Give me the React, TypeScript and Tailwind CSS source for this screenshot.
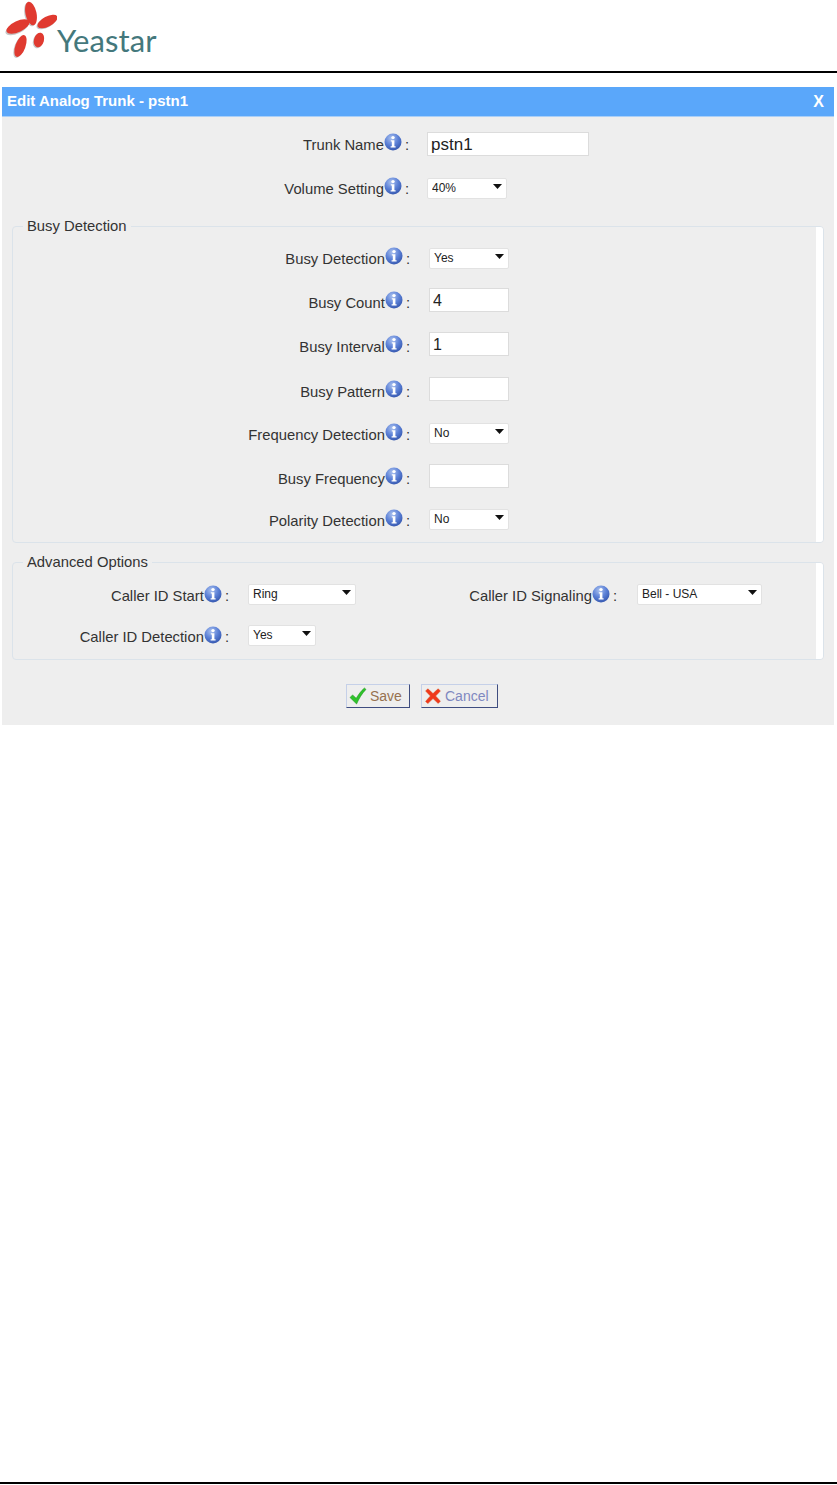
import type { ReactNode } from 'react'

/* ── small pieces ────────────────────────────────────────────────── */

function Logo() {
  return (
    <div className="flex h-[71px] items-start pl-[5px] pt-[1px]">
      <svg width="52" height="58" viewBox="0 0 52 58" className="shrink-0">
        <g fill="#8f8f8f" opacity="0.5">
          <ellipse cx="25" cy="13.5" rx="5.5" ry="12" transform="rotate(-12 25 13.5)" />
          <ellipse cx="12" cy="27" rx="5.5" ry="12.5" transform="rotate(65 12 27)" />
          <ellipse cx="41.5" cy="21.5" rx="5" ry="11" transform="rotate(62 41.5 21.5)" />
          <ellipse cx="14.5" cy="46" rx="5" ry="11.5" transform="rotate(20 14.5 46)" />
          <ellipse cx="33" cy="40" rx="5" ry="7.5" transform="rotate(15 33 40)" />
        </g>
        <g fill="#e03a30">
          <ellipse cx="26" cy="12.5" rx="5.5" ry="12" transform="rotate(-12 26 12.5)" />
          <ellipse cx="13" cy="25.5" rx="5.5" ry="12.5" transform="rotate(65 13 25.5)" />
          <ellipse cx="42.5" cy="20.5" rx="5" ry="11" transform="rotate(62 42.5 20.5)" />
          <ellipse cx="15.5" cy="45" rx="5" ry="11.5" transform="rotate(20 15.5 45)" />
          <ellipse cx="34" cy="39" rx="5" ry="7.5" transform="rotate(15 34 39)" />
        </g>
      </svg>
      <span className="mt-[17px] font-['Lato',sans-serif] text-[31px] leading-[44px] tracking-[0.1px] text-[#44787c]">
        Yeastar
      </span>
    </div>
  )
}

function InfoIcon() {
  return (
    <svg width="18" height="18" viewBox="0 0 18 18" className="mb-[6px] shrink-0">
      <defs>
        <radialGradient id="infoBlue" cx="40%" cy="28%" r="75%">
          <stop offset="0%" stopColor="#a9c0ee" />
          <stop offset="55%" stopColor="#5b80d6" />
          <stop offset="100%" stopColor="#3557ae" />
        </radialGradient>
      </defs>
      <circle cx="9" cy="9" r="8.5" fill="url(#infoBlue)" />
      <circle cx="9" cy="4.6" r="1.7" fill="#fff" />
      <path d="M6.8 7.2h3.6v6h1.2v1.4H6.6v-1.4h1.2V8.6h-1z" fill="#fff" />
    </svg>
  )
}

function Label({ text, width, shift = 'pt-[4px]' }: { text: string; width: string; shift?: string }) {
  return (
    <div className={`flex items-center justify-end ${width} ${shift}`}>
      <span className="whitespace-nowrap">{text}</span>
      <InfoIcon />
      <span className="ml-[3px]">:</span>
    </div>
  )
}

function Select({ value, width }: { value: string; width: string }) {
  return (
    <div className={`relative mb-[1px] h-[21px] ${width}`}>
      <select
        defaultValue={value}
        className="h-full w-full appearance-none rounded-[2px] border border-[#e2e2e2] bg-white pl-[4px] font-['Liberation_Sans',sans-serif] text-[12px] text-[#222] outline-none"
      >
        <option>{value}</option>
      </select>
      <svg width="9" height="5" viewBox="0 0 9 5" className="pointer-events-none absolute right-[5px] top-[8px]">
        <path d="M0 0h9L4.5 5z" fill="#111" />
      </svg>
    </div>
  )
}

function Input({ value, width, text = 'text-[16px]' }: { value?: string; width: string; text?: string }) {
  return (
    <input
      defaultValue={value}
      className={`h-[24px] border border-[#dcdcdc] bg-white pl-[3px] pt-[3px] font-['Liberation_Sans',sans-serif] text-[#222] outline-none ${text} ${width}`}
    />
  )
}

function Group({ title, className, children }: { title: string; className: string; children: ReactNode }) {
  return (
    <fieldset className={`relative mx-[10px] rounded-[4px] border border-[#dbe3ea] ${className}`}>
      <legend className="ml-[10px] h-[17px] px-[4px] leading-[17px]">{title}</legend>
      <div className="absolute -top-[8px] bottom-0 right-0 w-[7px] rounded-r-[3px] bg-white" />
      {children}
    </fieldset>
  )
}

/* ── data ────────────────────────────────────────────────────────── */

const BUSY = [
  { label: 'Busy Detection', select: 'Yes', top: 'mt-[10px]', shift: 'pt-[4px]' },
  { label: 'Busy Count', input: '4', top: 'mt-[19px]', shift: 'pt-[6px]' },
  { label: 'Busy Interval', input: '1', top: 'mt-[20px]', shift: 'pt-[6px]' },
  { label: 'Busy Pattern', input: '', top: 'mt-[21px]', shift: 'pt-[6px]' },
  { label: 'Frequency Detection', select: 'No', top: 'mt-[19px]', shift: 'pt-[6px]' },
  { label: 'Busy Frequency', input: '', top: 'mt-[20px]', shift: 'pt-[6px]' },
  { label: 'Polarity Detection', select: 'No', top: 'mt-[18px]', shift: 'pt-[6px]' },
]

/* ── main component ──────────────────────────────────────────────── */

export default function App() {
  return (
    <div className="flex h-[1485px] w-[837px] flex-col bg-white font-['Liberation_Sans',sans-serif] text-[14.8px] text-[#333]">
      <Logo />
      <div className="h-[2px] bg-black" />

      <div className="ml-[2px] mt-[14px] w-[832px] bg-[#eeeeee]">
        <div className="flex h-[30px] items-center justify-between border-b border-[#a9cff8] bg-[#5aa7fa] pl-[5px] pr-[10px] font-bold text-white">
          <span className="text-[15px]">Edit Analog Trunk - pstn1</span>
          <span className="text-[16px]">X</span>
        </div>

        <div className="mt-[15px] flex h-[24px] items-center">
          <Label text="Trunk Name" width="w-[407px]" shift="pt-[2px]" />
          <div className="ml-[18px]"><Input value="pstn1" width="w-[162px]" text="text-[17px]" /></div>
        </div>
        <div className="mt-[19px] flex h-[24px] items-center">
          <Label text="Volume Setting" width="w-[407px]" />
          <div className="ml-[18px]"><Select value="40%" width="w-[80px]" /></div>
        </div>

        <Group title="Busy Detection" className="mt-[19px] pb-[12px]">
          {BUSY.map(r => (
            <div key={r.label} className={`flex h-[24px] items-center ${r.top}`}>
              <Label text={r.label} width="w-[397px]" shift={r.shift} />
              <div className="ml-[19px]">
                {r.select ? <Select value={r.select} width="w-[80px]" /> : <Input value={r.input} width="w-[80px]" />}
              </div>
            </div>
          ))}
        </Group>

        <Group title="Advanced Options" className="mt-[11px] pb-[13px]">
          <div className="mt-[10px] flex h-[24px] items-center">
            <Label text="Caller ID Start" width="w-[216px]" shift="pt-[7px]" />
            <div className="ml-[19px]"><Select value="Ring" width="w-[108px]" /></div>
            <Label text="Caller ID Signaling" width="w-[261px]" shift="pt-[7px]" />
            <div className="ml-[20px]"><Select value="Bell - USA" width="w-[125px]" /></div>
          </div>
          <div className="mt-[17px] flex h-[24px] items-center">
            <Label text="Caller ID Detection" width="w-[216px]" shift="pt-[7px]" />
            <div className="ml-[19px]"><Select value="Yes" width="w-[68px]" /></div>
          </div>
        </Group>

        <div className="mt-[24px] flex justify-center gap-[11px] pb-[17px] pl-[8px] text-[14px]">
          <button
            type="button"
            className="flex h-[24px] w-[64px] items-center gap-[3px] border border-b-[#3f4d80] border-l-[#c5d0e8] border-r-[#3f4d80] border-t-[#c5d0e8] pl-[2px] text-[#97714f]"
          >
            <svg width="18" height="18" viewBox="0 0 18 18">
              <path d="M1 10.5l2.6-2.6 3.6 3.4C9.5 7.5 12 4 15.4 1l1.6 1.4C13 6.5 10 11.5 7.6 17z" fill="#2fc32b" stroke="#1b8f1a" strokeWidth="0.5" />
            </svg>
            Save
          </button>
          <button
            type="button"
            className="flex h-[24px] w-[77px] items-center gap-[4px] border border-b-[#3f4d80] border-l-[#c5d0e8] border-r-[#3f4d80] border-t-[#c5d0e8] pl-[3px] text-[#7f88c0]"
          >
            <svg width="16" height="16" viewBox="0 0 16 16">
              <path d="M2.8 0.8Q5.5 3 8 5.6 10.5 3 13.2 0.8l2.2 2.2Q13 5.5 10.6 8q2.4 2.5 4.8 5.2l-2.2 2.2Q10.5 13 8 10.6 5.5 13 2.8 15.6L0.6 13.4Q3 10.5 5.4 8 3 5.5 0.6 3z" fill="#f0381c" stroke="#d9501f" strokeWidth="0.5" />
            </svg>
            Cancel
          </button>
        </div>
      </div>

      <div className="mb-[1px] mt-auto h-[2px] bg-black" />
    </div>
  )
}
